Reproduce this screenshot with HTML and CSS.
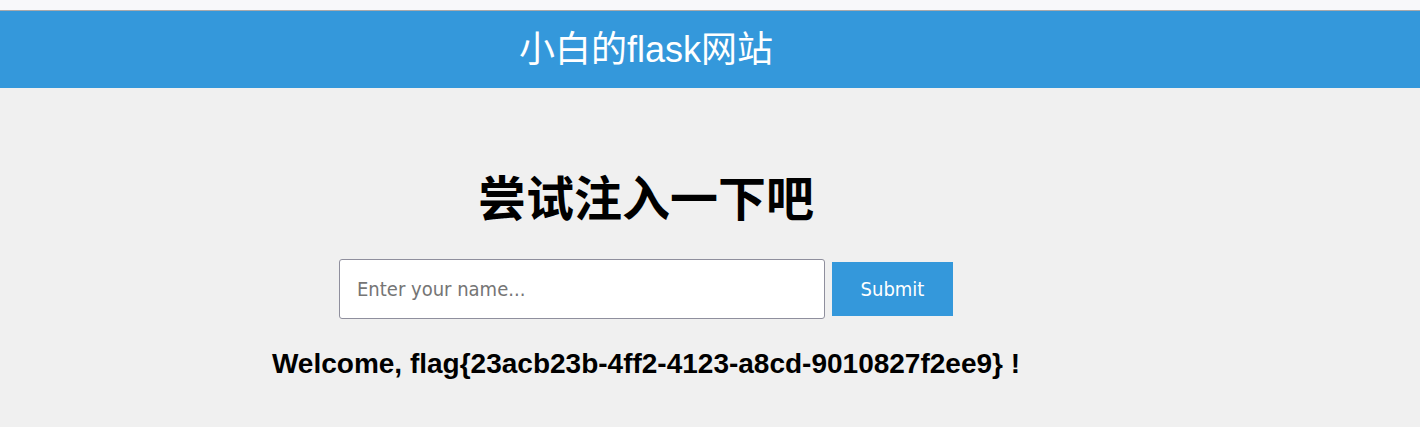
FILE: index.html
```html
<!DOCTYPE html>
<html lang="zh">
<head>
<meta charset="utf-8">
<title>小白的flask网站</title>
<link rel="stylesheet" href="styles.css">
</head>
<body>
<div class="chrome-strip"></div>
<header class="site-header">
  <div class="wrap">
    <h2 class="site-title">小白的flask网站</h2>
  </div>
</header>
<main class="wrap main">
  <h1 class="headline">尝试注入一下吧</h1>
  <form class="name-form">
    <input class="name-input" type="text" placeholder="Enter your name...">
    <button class="submit-btn" type="button">Submit</button>
  </form>
  <p class="welcome">Welcome, flag{23acb23b-4ff2-4123-a8cd-9010827f2ee9} !</p>
</main>
</body>
</html>
```

FILE: styles.css
```css
html, body {
  margin: 0;
  padding: 0;
}
body {
  background: #f0f0f0;
  font-family: "Liberation Sans", Arial, "Noto Sans CJK SC", sans-serif;
  color: #000;
  width: 1420px;
  height: 427px;
  overflow: hidden;
}
.chrome-strip {
  height: 10px;
  background: #f8f8fa;
  border-bottom: 1px solid #a9a9ab;
}
.wrap {
  width: 1292px;
}
.site-header {
  background: #3498db;
  height: 77px;
  display: flex;
  align-items: center;
}
.site-title {
  margin: 0;
  text-align: center;
  color: #fff;
  font-weight: normal;
  font-size: 36px;
  line-height: 44px;
}
.main {
  display: flex;
  flex-direction: column;
  align-items: center;
}
.headline {
  margin: 83px 0 0;
  font-size: 48px;
  line-height: 58px;
  font-weight: bold;
}
.name-form {
  margin-top: 30px;
  display: flex;
  align-items: center;
  gap: 7px;
}
.name-input {
  box-sizing: border-box;
  width: 486px;
  height: 60px;
  border: 1px solid #8f8f9d;
  border-radius: 3px;
  background: #fff;
  padding: 0 17px;
  font-family: "DejaVu Sans Condensed", "Liberation Sans", sans-serif;
  font-size: 20px;
  color: #000;
}
.name-input::placeholder {
  color: #757575;
}
.submit-btn {
  width: 121px;
  height: 54px;
  border: none;
  background: #3498db;
  color: #fff;
  font-family: "DejaVu Sans Condensed", "Liberation Sans", sans-serif;
  font-size: 20px;
  padding: 0;
}
.welcome {
  margin: 29px 0 0;
  font-size: 28px;
  line-height: 32px;
  font-weight: bold;
}
```
